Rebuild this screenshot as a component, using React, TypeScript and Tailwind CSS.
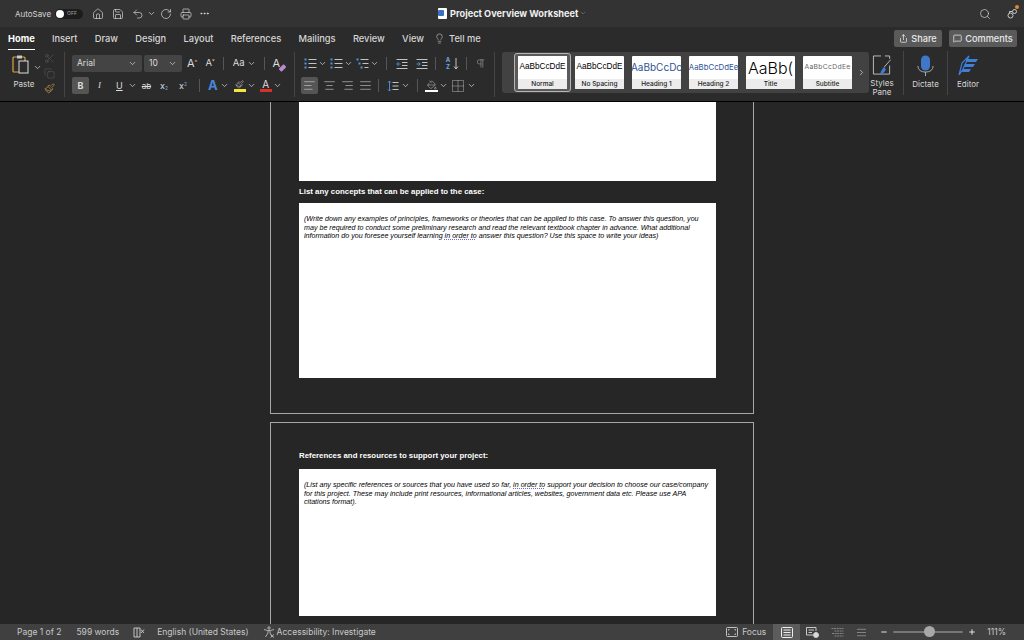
import React from 'react';
import {
  Home, Save, Undo2, RotateCw, Printer, MoreHorizontal, ChevronDown, ChevronRight, Search, Lightbulb,
  Scissors, Copy, Paintbrush, AlignLeft, AlignCenter, AlignRight, AlignJustify, Pilcrow,
  PaintBucket, Share, MessageSquare, Plus, Minus,
} from 'lucide-react';

const Chev = ({ className = '' }: { className?: string }) => (
  <ChevronDown size={9} strokeWidth={2} className={`text-[#d0d0d0] shrink-0 ${className}`} />
);

const Divider = ({ className = '' }: { className?: string }) => <div className={`w-px h-[13px] bg-[#565656] shrink-0 ${className}`} />;

const tabs = ['Insert', 'Draw', 'Design', 'Layout', 'References', 'Mailings', 'Review', 'View'];

const styles = [
  { label: 'No Spacing', sample: 'AaBbCcDdE', cls: 'text-[8.2px] text-black font-["Liberation_Sans",sans-serif]' },
  { label: 'Heading 1', sample: 'AaBbCcDc', cls: 'text-[10px] text-[#2f5496]' },
  { label: 'Heading 2', sample: 'AaBbCcDdEe', cls: 'text-[7.8px] text-[#2f5496]' },
  { label: 'Title', sample: 'AaBb(', cls: 'text-[16px] font-light text-black' },
  { label: 'Subtitle', sample: 'AaBbCcDdEe', cls: 'text-[6.8px] tracking-[0.3px] text-[#666]' },
];

const StyleCard = ({ label, sample, cls }: { label: string; sample: string; cls: string }) => (
  <div className="w-[49px] h-[33px] bg-white rounded-[1px] flex flex-col overflow-hidden shrink-0">
    <div className={`h-[23px] flex items-center justify-center whitespace-nowrap ${cls}`}>{sample}</div>
    <div className="h-[10px] bg-[#ececec] text-[6.5px] font-medium text-[#222] leading-[10px] text-center">{label}</div>
  </div>
);

// bullet, number and multilevel list buttons share one drawing
const ListIcon = ({ levels = false, className = '' }: { levels?: boolean; className?: string }) => (
  <svg width="13" height="13" viewBox="0 0 13 13" fill="none" className={`shrink-0 ${className}`}>
    <rect x="0.5" y="1.5" width="2" height="2" fill="#4f94e0" />
    <rect x={levels ? 2.5 : 0.5} y="5.5" width="2" height="2" fill="#4f94e0" />
    <rect x={levels ? 4.5 : 0.5} y="9.5" width="2" height="2" fill="#4f94e0" />
    <path d={levels ? 'M4.5 2.5H12.5M6.5 6.5H12.5M8.5 10.5H12.5' : 'M4.5 2.5H12.5M4.5 6.5H12.5M4.5 10.5H12.5'} stroke="#d4d4d4" strokeWidth="0.9" />
  </svg>
);

const IndentIcon = ({ out = false, className = '' }: { out?: boolean; className?: string }) => (
  <svg width="12" height="12" viewBox="0 0 12 12" fill="none" className={`shrink-0 ${className}`}>
    <path d="M0.5 1.5H11.5M6 4.5H11.5M6 7.5H11.5M0.5 10.5H11.5" stroke="#d4d4d4" strokeWidth="0.9" />
    <path d={out ? 'M4.5 6H0.8M2.5 4.2L0.8 6L2.5 7.8' : 'M0.5 6H4.2M2.5 4.2L4.2 6L2.5 7.8'} stroke="#4f94e0" strokeWidth="0.9" />
  </svg>
);

function TitleBar() {
  return (
    <div className="h-[27px] bg-[#333333] flex items-center text-[#e0e0e0] shrink-0">
      <span className="ml-[15px] text-[8px] text-[#d4d4d4]">AutoSave</span>
      <div className="ml-[4px] w-[28px] h-[10px] rounded-full bg-[#1c1c1c] flex items-center">
        <div className="w-[8px] h-[8px] ml-[1px] rounded-full bg-white" />
        <span className="ml-[3px] text-[5px] text-[#aaa]">OFF</span>
      </div>
      <Home size={12} strokeWidth={1.3} className="ml-[9px]" />
      <Save size={12} strokeWidth={1.3} className="ml-[8px]" />
      <Undo2 size={12} strokeWidth={1.3} className="ml-[8px]" />
      <Chev className="ml-[3px]" />
      <RotateCw size={12} strokeWidth={1.3} className="ml-[4px]" />
      <Printer size={12} strokeWidth={1.3} className="ml-[8px]" />
      <MoreHorizontal size={11} className="ml-[7px]" />
      <div className="ml-[228px] flex items-center">
        <div className="w-[9px] h-[11px] bg-white rounded-[1px] flex items-center justify-start">
          <div className="w-[6px] h-[6px] bg-[#3b6fc4] rounded-[1px]" />
        </div>
        <span className="ml-[3px] text-[9.2px] font-bold text-[#f0f0f0] whitespace-nowrap">Project Overview Worksheet</span>
        <ChevronDown size={8} className="ml-[1px] text-[#777]" />
      </div>
      <div className="ml-auto mr-[5px] flex items-center">
        <Search size={12} strokeWidth={1.3} />
        <div className="relative ml-[14px] w-[14px] h-[14px] flex items-center justify-center">
          <svg width="13" height="13" viewBox="0 0 13 13" fill="none" stroke="#d8d8d8" strokeWidth="0.9">
            <circle cx="4.5" cy="8.5" r="2.5" />
            <circle cx="8.5" cy="4.5" r="2" />
            <path d="M6 4.5H3.5V6" />
          </svg>
          <div className="absolute -top-[2px] right-0 w-[4px] h-[4px] rounded-full bg-[#e08a2c]" />
        </div>
      </div>
    </div>
  );
}

function TabRow() {
  return (
    <div className="h-[23px] bg-[#2b2b2b] flex items-center shrink-0 text-[9.3px] text-[#d6d6d6] font-medium">
      <div className="ml-[8px] h-full flex flex-col items-center justify-center relative">
        <span className="font-bold text-white">Home</span>
        <div className="absolute bottom-0 left-0 right-0 h-[1px] bg-white" />
      </div>
      {tabs.map((t) => (
        <span key={t} className="ml-[17.3px]">{t}</span>
      ))}
      <Lightbulb size={11} strokeWidth={1.2} className="ml-[10px]" />
      <span className="ml-[4px]">Tell me</span>
      <div className="ml-auto mr-[7px] flex items-center gap-[7px] text-[9.2px]">
        <div className="w-[48px] h-[17px] bg-[#5a5a5a] rounded-[2px] flex items-center justify-center gap-[3px] text-[#e8e8e8]">
          <Share size={9} />Share
        </div>
        <div className="w-[68px] h-[17px] bg-[#5a5a5a] rounded-[2px] flex items-center justify-center gap-[3px] text-[#e8e8e8]">
          <MessageSquare size={9} />Comments
        </div>
      </div>
    </div>
  );
}

function PasteGroup() {
  return (
    <div className="w-[65px] flex items-start shrink-0 border-r border-[#454545] h-[45px] mt-[2px]">
      <div className="ml-[12px] mt-[3px] flex flex-col items-center w-[20px]">
        <svg width="20" height="20" viewBox="0 0 20 20" fill="none">
          <rect x="1" y="2" width="12" height="15" rx="1" stroke="#d9a441" strokeWidth="1.2" />
          <rect x="5" y="0.5" width="5" height="3" fill="#ccc" />
          <rect x="7" y="6" width="9" height="12" fill="#2b2b2b" stroke="#ddd" strokeWidth="1" />
        </svg>
        <span className="mt-[3px] ml-[4px] text-[8px] text-[#d8d8d8]">Paste</span>
      </div>
      <Chev className="mt-[11px] ml-[1px]" />
      <div className="ml-[2px] flex flex-col items-center gap-[4px] mt-[1px]">
        <Scissors size={11} strokeWidth={1} className="text-[#667]" />
        <Copy size={11} strokeWidth={1} className="text-[#666]" />
        <Paintbrush size={11} strokeWidth={1.2} className="text-[#e0b050]" />
      </div>
    </div>
  );
}

function FontGroup() {
  return (
    <div className="w-[230px] pl-[7px] shrink-0 border-r border-[#454545] h-[45px] mt-[2px] pt-[3px] flex flex-col gap-[5px] text-[#dcdcdc]">
      <div className="flex items-center h-[17px]">
        <div className="w-[70px] h-[17px] bg-[#444] rounded-[2px] flex items-center px-[5px] text-[8.5px]">
          Arial<Chev className="ml-auto" />
        </div>
        <div className="ml-[2px] w-[38px] h-[17px] bg-[#444] rounded-[2px] flex items-center px-[5px] text-[8.5px]">
          10<Chev className="ml-auto" />
        </div>
        <span className="ml-[5px] text-[11px]">A<sup className="text-[6px]">^</sup></span>
        <span className="ml-[8px] text-[9.5px]">A<sup className="text-[6px]">˅</sup></span>
        <Divider className="ml-[8px]" />
        <span className="ml-[9px] text-[9.5px]">Aa</span>
        <Chev className="ml-[2px]" />
        <Divider className="ml-[8px]" />
        <span className="ml-[8px] relative text-[11px] w-[13px]">
          A
          <span className="absolute right-0 bottom-[2px] w-[7px] h-[4px] bg-[#b98ad0] rounded-[1px] -rotate-45" />
        </span>
      </div>
      <div className="flex items-center h-[17px] text-[9px]">
        <div className="w-[17px] h-[17px] bg-[#555] rounded-[2px] flex items-center justify-center font-bold">B</div>
        <span className="ml-[9px] italic font-['Liberation_Serif',serif]">I</span>
        <span className="ml-[15px] underline">U</span>
        <Chev className="ml-[5px]" />
        <span className="ml-[5px] line-through text-[8px]">ab</span>
        <span className="ml-[9px]">x<sub className="text-[5px] text-[#6ea6e0]">2</sub></span>
        <span className="ml-[11px]">x<sup className="text-[5px] text-[#6ea6e0]">2</sup></span>
        <Divider className="ml-[12px]" />
        <span className="ml-[8px] text-[13px] font-bold text-[#4a86d8]">A</span>
        <Chev className="ml-[2px]" />
        <div className="ml-[5px] w-[12px] flex flex-col items-center">
          <Paintbrush size={9} strokeWidth={1.2} />
          <div className="w-[12px] h-[3px] bg-[#f5e43a]" />
        </div>
        <Chev className="ml-[1px]" />
        <div className="ml-[4px] w-[12px] flex flex-col items-center leading-[10px]">
          <span className="text-[10px]">A</span>
          <div className="w-[12px] h-[3px] bg-[#d9302a]" />
        </div>
        <Chev className="ml-[1px]" />
      </div>
    </div>
  );
}

function ParagraphGroup() {
  return (
    <div className="w-[200px] pl-[7px] shrink-0 border-r border-[#454545] h-[45px] mt-[2px] pt-[3px] flex flex-col gap-[5px] text-[#d4d4d4]">
      <div className="flex items-center h-[17px] pl-[2px]">
        <ListIcon />
        <Chev className="ml-[1px]" />
        <ListIcon className="ml-[3px]" />
        <Chev className="ml-[1px]" />
        <ListIcon levels className="ml-[3px]" />
        <Chev className="ml-[1px]" />
        <Divider className="ml-[7px]" />
        <IndentIcon out className="ml-[9px]" />
        <IndentIcon className="ml-[8px]" />
        <Divider className="ml-[7px]" />
        <div className="ml-[8px] w-[8px] flex flex-col items-center text-[6px] leading-[6.5px] font-bold text-[#6ea6e0]">
          <span>A</span>
          <span>Z</span>
        </div>
        <svg width="6" height="13" viewBox="0 0 6 13" fill="none" className="ml-[1px]">
          <path d="M3 1V12M1 9.5L3 12L5 9.5" stroke="#d4d4d4" strokeWidth="0.9" />
        </svg>
        <Divider className="ml-[7px]" />
        <Pilcrow size={11} strokeWidth={1.4} className="ml-[8px] text-[#999]" />
      </div>
      <div className="flex items-center h-[17px] -ml-[1px]">
        <div className="w-[17px] h-[17px] bg-[#555] rounded-[2px] flex items-center justify-center">
          <AlignLeft size={13} strokeWidth={1.1} />
        </div>
        <AlignCenter size={13} strokeWidth={1.1} className="ml-[5px]" />
        <AlignRight size={13} strokeWidth={1.1} className="ml-[5px]" />
        <AlignJustify size={13} strokeWidth={1.1} className="ml-[5px]" />
        <Divider className="ml-[6px]" />
        <svg width="12" height="12" viewBox="0 0 12 12" fill="none" className="ml-[8px]">
          <path d="M2.5 1V11M1 2.5L2.5 1L4 2.5M1 9.5L2.5 11L4 9.5" stroke="#4f94e0" strokeWidth="0.9" />
          <path d="M5.5 2.5H11.5M5.5 6H11.5M5.5 9.5H11.5" stroke="#d4d4d4" strokeWidth="0.9" />
        </svg>
        <Chev className="ml-[2px]" />
        <Divider className="ml-[7px]" />
        <div className="ml-[7px] w-[13px] flex flex-col items-center">
          <PaintBucket size={10} strokeWidth={1.1} />
          <div className="w-[13px] h-[2px] bg-white" />
        </div>
        <Chev className="ml-[1px]" />
        <svg width="12" height="12" viewBox="0 0 12 12" fill="none" stroke="#d4d4d4" strokeWidth="0.8" strokeDasharray="1 1" className="ml-[4px]">
          <rect x="0.5" y="0.5" width="11" height="11" />
          <path d="M6 0.5V11.5M0.5 6H11.5" />
        </svg>
        <Chev className="ml-[3px]" />
      </div>
    </div>
  );
}

function Gallery() {
  return (
    <div className="ml-[7px] mt-[2px] w-[367px] h-[41px] bg-[#424242] rounded-[3px] flex items-center shrink-0 pl-[12px]">
      <div className="w-[57px] h-[39px] border border-[#b5b5b5] rounded-[3px] flex items-center justify-center bg-[#5a5a5a] shrink-0">
        <div className="w-[49px] h-[33px] bg-white flex flex-col overflow-hidden">
          <div className="h-[23px] flex items-center justify-center text-[8.2px] text-black whitespace-nowrap font-['Liberation_Sans',sans-serif]">AaBbCcDdE</div>
          <div className="h-[10px] bg-[#ececec] text-[6.5px] font-medium text-[#222] leading-[10px] text-center">Normal</div>
        </div>
      </div>
      <div className="ml-[4px] flex gap-[8px]">
        {styles.map((s) => (
          <StyleCard key={s.label} {...s} />
        ))}
      </div>
      <ChevronRight size={9} className="ml-[5px] text-[#ccc]" />
    </div>
  );
}

function RightTools() {
  return (
    <div className="flex h-[46px] mt-[1px] text-[8px] text-[#d8d8d8] leading-[9px] shrink-0">
      <div className="w-[26px] flex flex-col items-center pt-[4px] text-center">
        <svg width="22" height="22" viewBox="0 0 22 22" fill="none">
          <path d="M10 1H2v19h17v-9M14 1h5v3" stroke="#cfcfcf" strokeWidth="0.9" />
          <path d="M20 5L13 13" stroke="#bbb" strokeWidth="1" />
          <path d="M9 20c1-4 3-7 5-7l1 2c-1 3-3 5-6 5z" fill="#3b7dd8" />
        </svg>
        <span className="mt-[3px]">Styles<br />Pane</span>
      </div>
      <div className="ml-[8px] w-px h-[44px] bg-[#454545]" />
      <div className="w-[43px] flex flex-col items-center pt-[4px]">
        <svg width="17" height="22" viewBox="0 0 17 22" fill="none">
          <rect x="4" y="0.5" width="9" height="15" rx="4.5" fill="#3f78c9" />
          <path d="M1 11c0 4 3 6 7.5 6s7.5-2 7.5-6M8.5 17v4" stroke="#bbb" strokeWidth="0.9" />
        </svg>
        <span className="mt-[3px]">Dictate</span>
      </div>
      <div className="w-px h-[44px] bg-[#454545]" />
      <div className="w-[40px] flex flex-col items-center pt-[4px]">
        <svg width="23" height="22" viewBox="0 0 23 22" fill="none">
          <path d="M2 20L5 8 12 1h0L6 14z" stroke="#3f7fd8" strokeWidth="1.2" />
          <path d="M9 4h12l-2 3H9zM8 9h10l-2 3H7zM6 14h8l-2 3H5z" fill="#3f7fd8" />
        </svg>
        <span className="mt-[3px]">Editor</span>
      </div>
    </div>
  );
}

function StatusBar() {
  return (
    <div className="h-[16px] bg-[#404040] flex items-center text-[8.5px] text-[#c8c8c8] shrink-0">
      <span className="ml-[17px]">Page 1 of 2</span>
      <span className="ml-[15px]">599 words</span>
      <svg width="12" height="11" viewBox="0 0 12 11" fill="none" stroke="#d0d0d0" strokeWidth="0.9" className="ml-[14px]">
        <path d="M1 1H7V10H1zM4 1V10M8 2.5L11 6M11 2.5L8 6" />
      </svg>
      <span className="ml-[12px]">English (United States)</span>
      <svg width="12" height="12" viewBox="0 0 12 12" fill="none" stroke="#c8c8c8" strokeWidth="0.8" className="ml-[14px]">
        <circle cx="6" cy="2" r="1.2" />
        <path d="M1 3.5L4.5 4.5H7.5L11 3.5M5 4.5V7L2.5 11M7 4.5V7L9.5 11M7.5 8.5L11 11.5M11 8.5L7.5 11.5" />
      </svg>
      <span className="ml-[2px]">Accessibility: Investigate</span>
      <div className="ml-auto flex items-center h-full">
        <svg width="12" height="10" viewBox="0 0 12 10" fill="none" stroke="#d0d0d0" strokeWidth="0.9">
          <rect x="0.5" y="0.5" width="11" height="9" rx="1" />
          <path d="M2.5 3.5V2.5H3.5M8.5 2.5H9.5V3.5M2.5 6.5V7.5H3.5M9.5 6.5V7.5H8.5" />
        </svg>
        <span className="ml-[4px] mr-[7px]">Focus</span>
        <div className="w-[27px] h-full bg-[#5c5c5c] flex items-center justify-center">
          <svg width="12" height="11" viewBox="0 0 12 11" fill="none" stroke="#fff" strokeWidth="0.9">
            <rect x="0.5" y="0.5" width="11" height="10" rx="1" />
            <path d="M2.5 3H9.5M2.5 5.5H9.5M2.5 8H9.5" />
          </svg>
        </div>
        <svg width="13" height="11" viewBox="0 0 13 11" fill="none" stroke="#d8d8d8" strokeWidth="0.9" className="ml-[6px]">
          <path d="M7 8H0.5V0.5H10V4M2.5 3H8M2.5 5.5H6" />
          <circle cx="10" cy="8" r="2.5" fill="#d8d8d8" />
        </svg>
        <svg width="13" height="9" viewBox="0 0 13 9" fill="none" stroke="#8a8a8a" strokeWidth="0.9" className="ml-[12px]">
          <path d="M0.5 0.5H12.5M3.5 3H12.5M1 5.5H12.5M3.5 8H12.5" strokeDasharray="2 0.6" />
        </svg>
        <AlignJustify size={11} strokeWidth={1.1} className="ml-[12px]" />
        <Minus size={8} strokeWidth={2.5} className="ml-[13px] text-white" />
        <div className="ml-[5px] w-[70px] h-[2px] bg-[#777] rounded-full relative">
          <div className="absolute -top-[5px] left-[31px] w-[11px] h-[11px] rounded-full bg-[#a8a8a8]" />
        </div>
        <Plus size={8} strokeWidth={2.5} className="ml-[5px] text-white" />
        <span className="ml-[11px] mr-[18px]">111%</span>
      </div>
    </div>
  );
}

function AnswerBox({ lines, height }: { lines: React.ReactNode[]; height: string }) {
  return (
    <div className={`bg-white pt-[12px] pl-[5px] ${height} text-black italic text-[7.13px] leading-[8.6px] whitespace-nowrap`}>
      {lines.map((line, i) => (
        <div key={i}>{line}</div>
      ))}
    </div>
  );
}

const Flag = () => (
  <span className="underline decoration-dotted decoration-[#6a6ae0]">in order to</span>
);

export default function App() {
  return (
    <div className="w-[1024px] h-[640px] flex flex-col bg-[#262626] overflow-hidden font-['Inter',sans-serif]">
      <TitleBar />
      <TabRow />
      <div className="h-[52px] bg-[#2b2b2b] border-b border-black flex shrink-0">
        <PasteGroup />
        <FontGroup />
        <ParagraphGroup />
        <Gallery />
        <RightTools />
      </div>
      <div className="flex-1 overflow-hidden flex flex-col items-center font-['Liberation_Sans',sans-serif]">
        <div className="w-[484px] border border-t-0 border-[#a6a6a6] pl-[28px] pr-[37px] pb-[35px] shrink-0">
          <div className="h-[79px] bg-white" />
          <div className="h-[22px] text-[7.85px] font-bold text-white leading-[21px]">List any concepts that can be applied to the case:</div>
          <AnswerBox
            height="h-[175px]"
            lines={[
              '(Write down any examples of principles, frameworks or theories that can be applied to this case. To answer this question, you',
              'may be required to conduct some preliminary research and read the relevant textbook chapter in advance. What additional',
              <>information do you foresee yourself learning <Flag /> answer this question? Use this space to write your ideas)</>,
            ]}
          />
        </div>
        <div className="mt-[8px] w-[484px] border border-b-0 border-[#a6a6a6] pl-[28px] pr-[37px] pt-[26px] flex-1 shrink-0">
          <div className="h-[20px] text-[7.85px] font-bold text-white leading-[14px]">References and resources to support your project:</div>
          <AnswerBox
            height="h-[147px]"
            lines={[
              <>(List any specific references or sources that you have used so far, <Flag /> support your decision to choose our case/company</>,
              'for this project. These may include print resources, informational articles, websites, government data etc. Please use APA',
              'citations format).',
            ]}
          />
        </div>
      </div>
      <StatusBar />
    </div>
  );
}
